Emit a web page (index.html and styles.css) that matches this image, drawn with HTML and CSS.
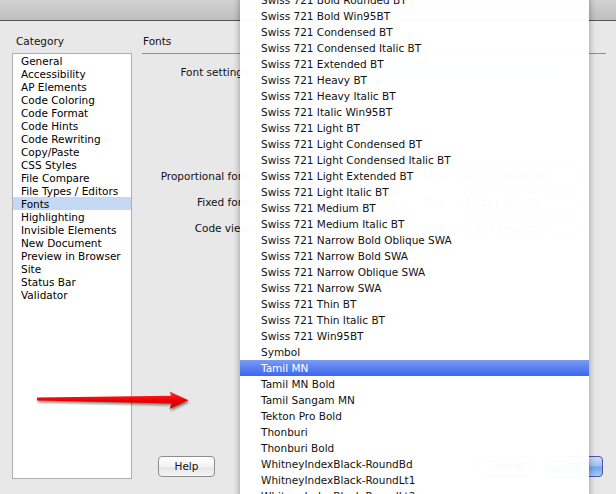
FILE: index.html
```html
<!DOCTYPE html>
<html>
<head>
<meta charset="utf-8">
<link rel="stylesheet" href="styles.css">
</head>
<body>
<div class="window">
  <div class="titlebar"></div>
  <div class="content">
    <div class="category-col">
      <div class="cat-label">Category</div>
      <ul class="cat-list">
        <li>General</li>
        <li>Accessibility</li>
        <li>AP Elements</li>
        <li>Code Coloring</li>
        <li>Code Format</li>
        <li>Code Hints</li>
        <li>Code Rewriting</li>
        <li>Copy/Paste</li>
        <li>CSS Styles</li>
        <li>File Compare</li>
        <li>File Types / Editors</li>
        <li class="selected">Fonts</li>
        <li>Highlighting</li>
        <li>Invisible Elements</li>
        <li>New Document</li>
        <li>Preview in Browser</li>
        <li>Site</li>
        <li>Status Bar</li>
        <li>Validator</li>
      </ul>
    </div>
    <div class="panel">
      <div class="panel-heading">Fonts</div>
      <div class="form">
        <div class="row row-settings">
          <div class="label">Font settings:</div>
          <div class="settings-box"><div class="settings-sel">Western European</div></div>
        </div>
        <div class="row row-font first">
          <div class="label">Proportional font:</div>
          <div class="popup font-popup">Times</div>
          <div class="size-label">Size:</div>
          <div class="popup size-popup">12 pt ( Medium )</div>
        </div>
        <div class="row row-font">
          <div class="label">Fixed font:</div>
          <div class="popup font-popup">Courier</div>
          <div class="size-label">Size:</div>
          <div class="popup size-popup">10 pt ( Small )</div>
        </div>
        <div class="row row-font">
          <div class="label">Code view:</div>
          <div class="popup font-popup">Monaco</div>
          <div class="size-label">Size:</div>
          <div class="popup size-popup">9 pt ( Smallest )</div>
        </div>
      </div>
      <div class="buttons">
        <div class="btn btn-help">Help</div>
        <div class="spacer"></div>
        <div class="btn btn-cancel">Cancel</div>
        <div class="btn btn-ok">OK</div>
      </div>
    </div>
  </div>
</div>

<ul class="menu">
  <li>Swiss 721 Bold Rounded BT</li>
  <li>Swiss 721 Bold Win95BT</li>
  <li>Swiss 721 Condensed BT</li>
  <li>Swiss 721 Condensed Italic BT</li>
  <li>Swiss 721 Extended BT</li>
  <li>Swiss 721 Heavy BT</li>
  <li>Swiss 721 Heavy Italic BT</li>
  <li>Swiss 721 Italic Win95BT</li>
  <li>Swiss 721 Light BT</li>
  <li>Swiss 721 Light Condensed BT</li>
  <li>Swiss 721 Light Condensed Italic BT</li>
  <li>Swiss 721 Light Extended BT</li>
  <li>Swiss 721 Light Italic BT</li>
  <li>Swiss 721 Medium BT</li>
  <li>Swiss 721 Medium Italic BT</li>
  <li>Swiss 721 Narrow Bold Oblique SWA</li>
  <li>Swiss 721 Narrow Bold SWA</li>
  <li>Swiss 721 Narrow Oblique SWA</li>
  <li>Swiss 721 Narrow SWA</li>
  <li>Swiss 721 Thin BT</li>
  <li>Swiss 721 Thin Italic BT</li>
  <li>Swiss 721 Win95BT</li>
  <li>Symbol</li>
  <li class="active">Tamil MN</li>
  <li>Tamil MN Bold</li>
  <li>Tamil Sangam MN</li>
  <li>Tekton Pro Bold</li>
  <li>Thonburi</li>
  <li>Thonburi Bold</li>
  <li>WhitneyIndexBlack-RoundBd</li>
  <li>WhitneyIndexBlack-RoundLt1</li>
  <li>WhitneyIndexBlack-RoundLt2</li>
</ul>

<svg class="arrow" width="170" height="35" viewBox="0 0 170 35">
  <defs>
    <linearGradient id="red" x1="0" y1="0" x2="0" y2="1">
      <stop offset="0" stop-color="#ff3030"/>
      <stop offset="0.5" stop-color="#f00000"/>
      <stop offset="1" stop-color="#c40000"/>
    </linearGradient>
  </defs>
  <path d="M7 12.6 L141.5 10.8 L139.5 6.5 L158.5 15.2 L139.5 24 L141.5 18.6 L7 15.6 Z" fill="url(#red)"/>
</svg>
</body>
</html>
```

FILE: styles.css
```css
* { box-sizing: border-box; }

html, body {
  margin: 0;
  padding: 0;
  width: 616px;
  height: 494px;
  overflow: hidden;
}

body {
  position: relative;
  background: #e8e8e8;
  font-family: "DejaVu Sans", "Liberation Sans", sans-serif;
  font-size: 10.5px;
  color: #111;
}

.window {
  display: flex;
  flex-direction: column;
  height: 494px;
}

.titlebar {
  height: 21px;
  flex: none;
  background: linear-gradient(#d3d3d3, #c9c9c9 45%, #bfbfbf);
  border-bottom: 1px solid #555;
}

.content {
  flex: 1;
  display: flex;
  gap: 10px;
  padding: 13px 10px 15px 12px;
}

.category-col {
  width: 120px;
  flex: none;
  display: flex;
  flex-direction: column;
}

.cat-label {
  line-height: 14px;
  margin: 0 0 5px 4px;
}

.cat-list {
  list-style: none;
  margin: 0;
  padding: 0;
  height: 426px;
  background: #fff;
  border: 1px solid #aeaeae;
}

.cat-list li {
  height: 13px;
  line-height: 14px;
  padding-left: 8px;
  white-space: nowrap;
  color: #000;
}

.cat-list li.selected {
  background: #c5d8f4;
}

.panel {
  flex: 1;
  display: flex;
  flex-direction: column;
}

.panel-heading {
  line-height: 14px;
  padding: 0 0 5px 1px;
  border-bottom: 1px solid #8f8f8f;
}

.form {
  margin-top: 11px;
  display: flex;
  flex-direction: column;
}

.row {
  display: flex;
  align-items: center;
}

.label {
  width: 110px;
  flex: none;
  text-align: right;
  line-height: 14px;
}

.row-settings {
  align-items: flex-start;
}

.settings-box {
  margin-left: 2px;
  width: 312px;
  height: 86px;
  background: #fff;
  border: 1px solid #c5c5c5;
  padding-top: 2px;
}

.settings-sel {
  background: #d6e3f6;
  line-height: 14px;
  padding-left: 4px;
  color: #555;
}

.row-font {
  height: 20px;
  margin-top: 6px;
}

.row-font.first {
  margin-top: 15px;
}

.popup {
  height: 18px;
  line-height: 16px;
  border: 1px solid #b5b5b5;
  border-radius: 4px;
  background: linear-gradient(#fff, #efefef);
  padding-left: 8px;
  white-space: nowrap;
  color: #555;
}

.size-label { color: #555; }

.font-popup {
  margin-left: 2px;
  width: 154px;
}

.size-label {
  margin-left: 15px;
  width: 27px;
}

.size-popup {
  margin-left: 6px;
  width: 124px;
}

.buttons {
  margin-top: auto;
  margin-bottom: 2px;
  display: flex;
  align-items: center;
  padding: 0 3px 0 16px;
}

.spacer { flex: 1; }

.btn {
  height: 21px;
  line-height: 19px;
  text-align: center;
  border-radius: 4px;
}

.btn-help {
  width: 57px;
  border: 1px solid #8d8d8d;
  background: linear-gradient(#ffffff, #f3f3f3 50%, #e6e6e6 51%, #f4f4f4);
  color: #111;
}

.btn-cancel {
  width: 55px;
  border: 1px solid #9a9a9a;
  background: linear-gradient(#fff, #eee);
}

.btn-ok {
  width: 58px;
  margin-left: 12px;
  border: 1px solid #4b54a6;
  background: linear-gradient(#cfe1f9, #9cc2f1 48%, #6ea6eb 52%, #a3cbf4);
}

/* pop-up font menu lying over the dialog */
.menu {
  position: absolute;
  left: 240px;
  top: -8px;
  width: 349px;
  margin: 0;
  padding: 0;
  list-style: none;
  background: rgba(255, 255, 255, 0.972);
  box-shadow: 0 2px 7px rgba(0, 0, 0, 0.38);
}

.menu li {
  height: 16px;
  line-height: 16px;
  padding-left: 21px;
  white-space: nowrap;
  color: #111;
}

.menu li.active {
  background: linear-gradient(#7b9bf5, #5a80f1 50%, #3d68ee);
  color: #fff;
}

/* annotation arrow drawn over the screenshot */
.arrow {
  position: absolute;
  left: 30px;
  top: 385px;
  overflow: visible;
  filter: drop-shadow(1px 2px 1.2px rgba(0, 0, 0, 0.45));
}
```
